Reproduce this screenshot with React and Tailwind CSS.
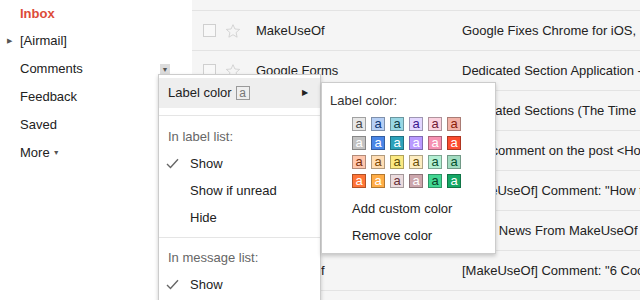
import React from "react";

const swatches = [
  [
    ["#e7e7e7", "#464646"],
    ["#b6cff5", "#0d3472"],
    ["#98d7e4", "#0d3b44"],
    ["#e3d7ff", "#3d188e"],
    ["#fbd3e0", "#711a36"],
    ["#f2b2a8", "#8a1c0a"],
  ],
  [
    ["#c2c2c2", "#ffffff"],
    ["#4986e7", "#ffffff"],
    ["#2da2bb", "#ffffff"],
    ["#b99aff", "#ffffff"],
    ["#f691b2", "#ffffff"],
    ["#fb4c2f", "#ffffff"],
  ],
  [
    ["#ffc8af", "#7a2e0b"],
    ["#ffdeb5", "#7a4706"],
    ["#fbe983", "#594c05"],
    ["#fdedc1", "#684e07"],
    ["#b3efd3", "#0b4f30"],
    ["#a2dcc1", "#04502e"],
  ],
  [
    ["#ff7537", "#ffffff"],
    ["#ffad46", "#ffffff"],
    ["#ebdbde", "#662e37"],
    ["#cca6ac", "#ffffff"],
    ["#42d692", "#094228"],
    ["#16a765", "#ffffff"],
  ],
];

const emails = [
  { from: "MakeUseOf", subject: "Google Fixes Chrome for iOS, Brings Back Sync" },
  { from: "Google Forms", subject: "Dedicated Section Application - Response" },
  { from: "Google Forms", subject: "Dedicated Sections (The Time Now Is Right)" },
  { from: "WordPress", subject: "New comment on the post <How To Use Gmail>" },
  { from: "WordPress", subject: "[MakeUseOf] Comment: \"How to Organize\"" },
  { from: "MakeUseOf", subject: "Fresh News From MakeUseOf" },
  { from: "MakeUseOf", subject: "[MakeUseOf] Comment: \"6 Cool Tips\"" },
  { from: "MakeUseOf", subject: "Daily Digest" },
];

const labels = ["Comments", "Feedback", "Saved"];

const Star = () => (
  <svg width="16" height="16" viewBox="0 0 24 24">
    <polygon
      points="12,2.5 14.9,9 22,9.6 16.6,14.3 18.2,21.3 12,17.6 5.8,21.3 7.4,14.3 2,9.6 9.1,9"
      fill="none"
      stroke="#cccccc"
      strokeWidth="1.2"
    />
  </svg>
);

const Check = () => (
  <svg width="13" height="11" viewBox="0 0 13 11">
    <path d="M1 6 L4.5 9.5 L12 1.2" fill="none" stroke="#666" strokeWidth="1.4" />
  </svg>
);

const App = () => {
  return (
    <div className="relative w-[640px] h-[300px] overflow-hidden bg-white font-['Liberation_Sans',Arial,sans-serif] text-[13px] text-[#222]">
      <div className="flex h-full">
        {/* sidebar */}
        <div className="w-[192px] shrink-0 bg-white">
          <div className="h-[27px] flex items-center pl-[20px] font-bold text-[#dd4b39]">
            Inbox
          </div>
          <div className="h-7 flex items-center">
            <span className="w-[20px] pl-[7px] text-[7px] text-[#555]">▶</span>
            <span>[Airmail]</span>
          </div>
          {labels.map((l, i) => (
            <div key={l} className="h-7 flex items-center justify-between pl-[20px] pr-[22px]">
              <span>{l}</span>
              {i === 0 && (
                <span className="w-[10px] h-[10px] bg-[#dcdcdc] flex items-center justify-center text-[7px] text-[#555] leading-none">
                  ▼
                </span>
              )}
            </div>
          ))}
          <div className="h-7 flex items-center pl-[20px] gap-[3px]">
            <span>More</span>
            <span className="text-[7px] text-[#555]">▼</span>
          </div>
        </div>

        {/* message list */}
        <div className="flex-1 min-w-0 bg-[#f5f5f5]">
          <div className="h-[11px] border-b border-[#e3e3e3]" />
          {emails.map((m, i) => (
            <div key={i} className="h-10 flex items-center border-b border-[#e3e3e3] whitespace-nowrap">
              <div className="shrink-0 ml-[11px] w-[13px] h-[13px] border border-[#cfcfcf] bg-[#f8f8f8]" />
              <div className="shrink-0 ml-[9px] w-[31px]">
                <Star />
              </div>
              <div className="shrink-0 w-[206px]">{m.from}</div>
              <div className="min-w-0 overflow-hidden">{m.subject}</div>
            </div>
          ))}
        </div>
      </div>

      {/* label menu */}
      <div className="absolute left-[158px] top-[74px] w-[163px] h-[240px] bg-white border border-black/20 shadow-[0_2px_4px_rgba(0,0,0,0.2)] pt-[3px]">
        <div className="h-[30px] bg-[#eeeeee] flex items-center pl-[9px] pr-[12px]">
          <span>Label color</span>
          <span className="ml-[4px] w-[14px] h-[14px] border border-[#999] text-[#777] text-[12px] leading-none flex items-center justify-center">
            a
          </span>
          <span className="ml-auto text-[8px] text-[#222]">▶</span>
        </div>
        <div className="my-[7px] border-t border-[#e5e5e5]" />
        <div className="h-[27px] flex items-center pl-[9px] text-[#666]">In label list:</div>
        <div className="h-[27px] flex items-center">
          <span className="w-[31px] pl-[7px]">
            <Check />
          </span>
          <span>Show</span>
        </div>
        <div className="h-[27px] flex items-center pl-[31px]">Show if unread</div>
        <div className="h-[27px] flex items-center pl-[31px]">Hide</div>
        <div className="my-[6px] border-t border-[#e5e5e5]" />
        <div className="h-[27px] flex items-center pl-[9px] text-[#666]">In message list:</div>
        <div className="h-[27px] flex items-center">
          <span className="w-[31px] pl-[7px]">
            <Check />
          </span>
          <span>Show</span>
        </div>
      </div>

      {/* color submenu */}
      <div className="absolute left-[321px] top-[82px] w-[175px] h-[172px] bg-white border border-black/20 shadow-[0_2px_4px_rgba(0,0,0,0.2)] pt-[8px]">
        <div className="h-5 flex items-center pl-[8px] text-[#333]">Label color:</div>
        <div className="mt-[6px] pl-[30px] flex flex-col gap-[5px]">
          {swatches.map((row, r) => (
            <div key={r} className="flex gap-[5px]">
              {row.map(([bg, fg], c) => (
                <div
                  key={c}
                  className="w-[14px] h-[14px] border border-black/30 flex items-center justify-center text-[13px] leading-none pb-[1px]"
                  style={{ backgroundColor: bg, color: fg }}
                >
                  a
                </div>
              ))}
            </div>
          ))}
        </div>
        <div className="mt-[7px] h-[27px] flex items-center pl-[30px]">Add custom color</div>
        <div className="h-[27px] flex items-center pl-[30px]">Remove color</div>
      </div>
    </div>
  );
};

export default App;
